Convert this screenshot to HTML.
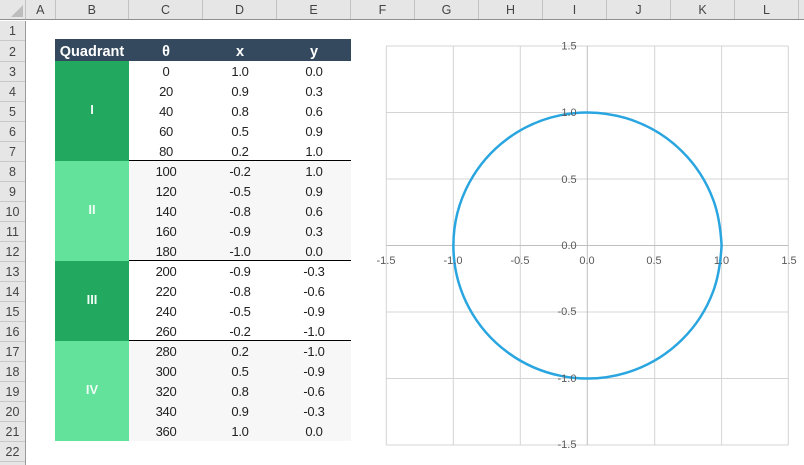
<!DOCTYPE html>
<html><head><meta charset="utf-8"><style>
html,body{margin:0;padding:0;background:#fff;width:804px;height:465px;overflow:hidden}
body{font-family:"Liberation Sans",sans-serif}
#w{position:relative;width:804px;height:465px;overflow:hidden;background:#fff}
.abs{position:absolute}
#ch{left:0;top:0;width:804px;height:19px;background:#e6e6e6;border-bottom:1.5px solid #8f8f8f}
.c{position:absolute;top:0;height:19px;line-height:20px;text-align:center;font-size:12.5px;color:#444;border-right:1px solid #c2c2c2;box-sizing:border-box}
#rh{left:0;top:20.5px;width:25px;height:445px;background:#e6e6e6;border-right:1px solid #9a9a9a}
#rh div{height:19px;border-bottom:1px solid #c8c8c8;line-height:20px;font-size:12.5px;color:#444;text-align:center}
#rh .t{height:20.7px;line-height:22px}
#g{left:55px;top:39px;display:grid;grid-template-columns:74px 74px 74px 74px;grid-template-rows:21.7px repeat(19,20px);font-size:13px;color:#222;text-align:center;line-height:22.5px;letter-spacing:-.3px}
.h{background:#34495e;color:#fff;font-weight:bold;font-size:14.5px;line-height:26px;letter-spacing:0}
.q{font-weight:bold;font-size:13px;display:flex;align-items:center;justify-content:center;color:#eefcf4;letter-spacing:0}
.d{background:#22a85f}.l{background:#62e29a}
.s{background:#f7f7f7}
.b{box-shadow:inset 0 -1px 0 #000}
svg{position:absolute;left:0;top:0}
svg text{font-family:"Liberation Sans",sans-serif;font-size:11px;fill:#595959;text-anchor:middle}
</style></head><body><div id="w">
<div class="abs" id="ch">
<div class="c" style="left:0;width:26px"><svg width="26" height="19"><path d="M11 17L23 5V17Z" fill="#bdbdbd"/></svg></div>
<div class="c" style="left:26px;width:29.6px">A</div>
<div class="c" style="left:55.6px;width:73.4px">B</div>
<div class="c" style="left:129px;width:74px">C</div>
<div class="c" style="left:203px;width:74px">D</div>
<div class="c" style="left:277px;width:74px">E</div>
<div class="c" style="left:351px;width:64px">F</div>
<div class="c" style="left:415px;width:64px">G</div>
<div class="c" style="left:479px;width:64px">H</div>
<div class="c" style="left:543px;width:64px">I</div>
<div class="c" style="left:607px;width:64px">J</div>
<div class="c" style="left:671px;width:64px">K</div>
<div class="c" style="left:735px;width:64px">L</div>
</div>
<div class="abs" id="rh">
<div>1</div><div class="t">2</div><div>3</div><div>4</div><div>5</div><div>6</div><div>7</div><div>8</div><div>9</div><div>10</div><div>11</div><div>12</div><div>13</div><div>14</div><div>15</div><div>16</div><div>17</div><div>18</div><div>19</div><div>20</div><div>21</div><div>22</div><div>23</div>
</div>
<div class="abs" id="g">
<div class="h">Quadrant</div><div class="h">θ</div><div class="h">x</div><div class="h">y</div>
<div class="q d" style="grid-row:span 5">I</div><div>0</div><div>1.0</div><div>0.0</div>
<div>20</div><div>0.9</div><div>0.3</div>
<div>40</div><div>0.8</div><div>0.6</div>
<div>60</div><div>0.5</div><div>0.9</div>
<div class="b">80</div><div class="b">0.2</div><div class="b">1.0</div>
<div class="q l" style="grid-row:span 5">II</div><div class="s">100</div><div class="s">-0.2</div><div class="s">1.0</div>
<div class="s">120</div><div class="s">-0.5</div><div class="s">0.9</div>
<div class="s">140</div><div class="s">-0.8</div><div class="s">0.6</div>
<div class="s">160</div><div class="s">-0.9</div><div class="s">0.3</div>
<div class="s b">180</div><div class="s b">-1.0</div><div class="s b">0.0</div>
<div class="q d" style="grid-row:span 4">III</div><div>200</div><div>-0.9</div><div>-0.3</div>
<div>220</div><div>-0.8</div><div>-0.6</div>
<div>240</div><div>-0.5</div><div>-0.9</div>
<div class="b">260</div><div class="b">-0.2</div><div class="b">-1.0</div>
<div class="q l" style="grid-row:span 5">IV</div><div class="s">280</div><div class="s">0.2</div><div class="s">-1.0</div>
<div class="s">300</div><div class="s">0.5</div><div class="s">-0.9</div>
<div class="s">320</div><div class="s">0.8</div><div class="s">-0.6</div>
<div class="s">340</div><div class="s">0.9</div><div class="s">-0.3</div>
<div class="s">360</div><div class="s">1.0</div><div class="s">0.0</div>
</div>
<svg width="804" height="465">
<path d="M386.3 46V445M453.3 46V445M520.3 46V445M654.7 46V445M721.6 46V445M788.3 46V445M386.3 46H788.3M386.3 112.5H788.3M386.3 179H788.3M386.3 312H788.3M386.3 378.5H788.3M386.3 445H788.3" stroke="#d4d4d4" stroke-width="1" fill="none"/>
<path d="M587.3 46V445M386.3 245.5H788.3" stroke="#bfbfbf" stroke-width="1" fill="none"/>
<path d="M721.6 245.5C720.6 228 718.5 214 713.3 200A134 133 0 1 0 713.3 291C718.5 277 720.6 262 721.6 245.5Z" fill="none" stroke="#29a5e0" stroke-width="2.5" stroke-linejoin="round"/>
<text x="386" y="264">-1.5</text><text x="453" y="264">-1.0</text><text x="520" y="264">-0.5</text><text x="587" y="264">0.0</text><text x="654" y="264">0.5</text><text x="721.5" y="264">1.0</text><text x="789" y="264">1.5</text>
<text x="569" y="49.5">1.5</text><text x="569" y="116">1.0</text><text x="569" y="183">0.5</text><text x="569" y="249">0.0</text><text x="567" y="315">-0.5</text><text x="567" y="382">-1.0</text><text x="567" y="448">-1.5</text>
</svg>
</div></body></html>
